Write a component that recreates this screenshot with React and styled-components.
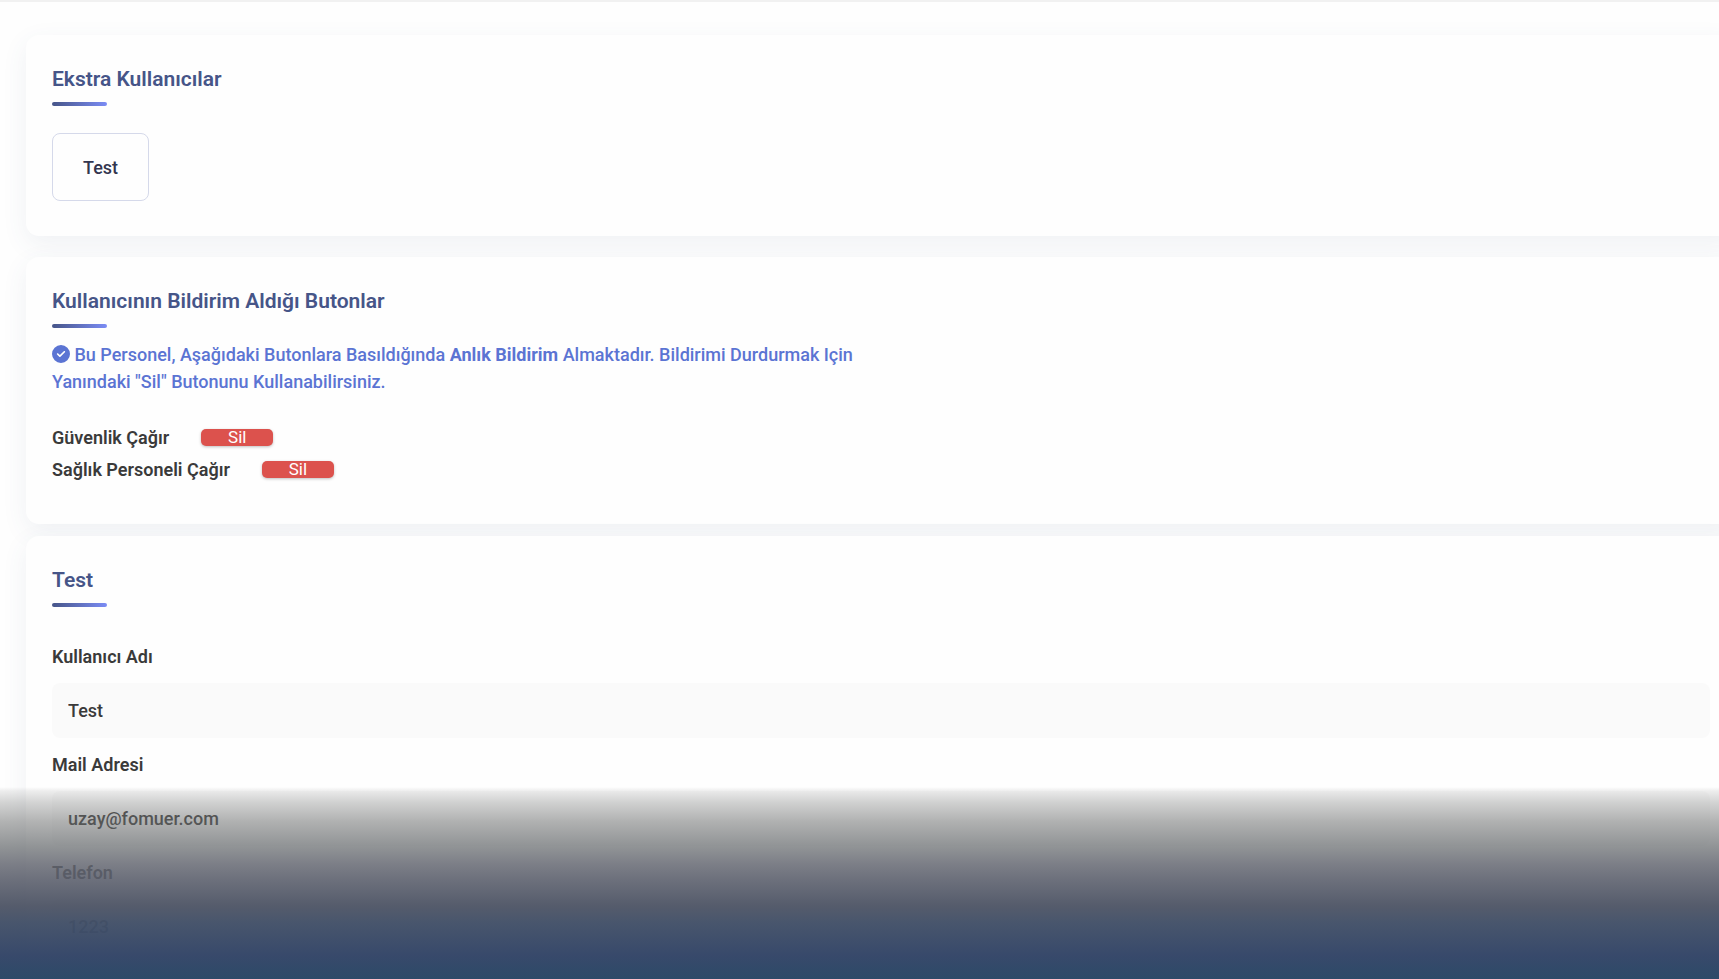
import React from "react";
import styled, { createGlobalStyle } from "styled-components";
import { FaCircleCheck } from "react-icons/fa6";

const GlobalStyle = createGlobalStyle`
  *, *::before, *::after { box-sizing: border-box; }
  body {
    margin: 0;
    background: #fefefe;
    color: #3a3a3a;
    font-family: Roboto, "Liberation Sans", sans-serif;
    font-size: 18px;
    font-weight: 500;
  }
`;

const Page = styled.main`
  position: relative;
  height: 100vh;
  overflow: hidden;
  padding: 33px 0 0 26px;
  border-top: 2px solid #f1f1f1;
`;

const Card = styled.section`
  margin: 0 -17px ${(p) => p.$gap || 0}px 0;
  padding: 26px 26px ${(p) => p.$bottom || 35}px;
  border-radius: 13px;
  background: #fefefe;
  box-shadow: 0 8px 26px rgba(70, 90, 130, 0.08);
`;

const Title = styled.h2`
  margin: 0;
  color: #465588;
  font-size: 21px;
  font-weight: 600;
  line-height: 36px;

  &::after {
    content: "";
    display: block;
    width: 55px;
    height: 4px;
    margin-top: 5px;
    border-radius: 2px;
    background: linear-gradient(90deg, #465588, #7b8cf5);
  }
`;

const UserButton = styled.button`
  display: block;
  height: 68px;
  margin-top: 27px;
  padding: 0 30px;
  border: 1px solid #d5d9ea;
  border-radius: 8px;
  background: transparent;
  color: #33364f;
  font: inherit;
  cursor: pointer;
`;

const Notice = styled.p`
  width: 50%;
  margin: 13px 0 26px;
  color: #5b74d3;
  line-height: 27px;

  svg { vertical-align: -2px; }
  strong { font-weight: 700; }
`;

const AlertList = styled.ul`
  margin: 0;
  padding: 0;
  list-style: none;
`;

const AlertRow = styled.li`
  display: flex;
  align-items: center;
  gap: 32px;
  height: 32px;
  font-weight: 600;
`;

const DeleteButton = styled.button`
  width: 72px;
  height: 17px;
  padding: 0;
  border: 0;
  border-radius: 5px;
  background: #dc524d;
  box-shadow: 0 1px 3px rgba(0, 0, 0, 0.25);
  color: #fff;
  font: 400 17px/17px Roboto, "Liberation Sans", sans-serif;
  cursor: pointer;
`;

const Form = styled.form`
  margin-top: 23px;
`;

const Label = styled.label`
  display: block;
  line-height: 53px;
  font-weight: 600;
`;

const Input = styled.input`
  display: block;
  width: 100%;
  height: 55px;
  padding: 0 16px;
  border: 0;
  border-radius: 8px;
  background: #fafafa;
  color: inherit;
  font: inherit;
`;

const BottomFade = styled.div`
  position: absolute;
  right: 0;
  bottom: 0;
  left: 0;
  height: 192px;
  pointer-events: none;
  background: linear-gradient(
    180deg,
    rgba(120, 120, 120, 0) 0%,
    rgba(120, 120, 120, 0.12) 2%,
    rgba(120, 122, 121, 0.32) 8%,
    rgba(108, 110, 110, 0.52) 18%,
    rgba(103, 107, 110, 0.72) 31%,
    rgba(98, 101, 111, 0.83) 40%,
    rgba(91, 95, 108, 0.89) 48%,
    rgba(76, 83, 100, 0.95) 62%,
    rgba(66, 80, 104, 0.97) 71%,
    rgba(53, 71, 105, 0.99) 88%,
    rgb(45, 74, 104) 100%
  );
`;

const alerts = ["Güvenlik Çağır", "Sağlık Personeli Çağır"];

const fields = [
  { id: "username", label: "Kullanıcı Adı", type: "text", value: "Test" },
  { id: "mail", label: "Mail Adresi", type: "email", value: "uzay@fomuer.com" },
  { id: "phone", label: "Telefon", type: "tel", value: "1223" },
];

export default function App() {
  return (
    <>
      <GlobalStyle />
      <Page>
        <Card $gap={21}>
          <Title>Ekstra Kullanıcılar</Title>
          <UserButton type="button">Test</UserButton>
        </Card>

        <Card $gap={12} $bottom={39}>
          <Title>Kullanıcının Bildirim Aldığı Butonlar</Title>
          <Notice>
            <FaCircleCheck size={18} aria-hidden="true" /> Bu Personel, Aşağıdaki Butonlara
            Basıldığında <strong>Anlık Bildirim</strong> Almaktadır. Bildirimi Durdurmak Için
            Yanındaki "Sil" Butonunu Kullanabilirsiniz.
          </Notice>
          <AlertList>
            {alerts.map((name) => (
              <AlertRow key={name}>
                <span>{name}</span>
                <DeleteButton type="button" aria-label={`${name} Sil`}>Sil</DeleteButton>
              </AlertRow>
            ))}
          </AlertList>
        </Card>

        <Card>
          <Title>Test</Title>
          <Form>
            {fields.map((f) => (
              <React.Fragment key={f.id}>
                <Label htmlFor={f.id}>{f.label}</Label>
                <Input id={f.id} type={f.type} defaultValue={f.value} />
              </React.Fragment>
            ))}
          </Form>
        </Card>
        <BottomFade />
      </Page>
    </>
  );
}
